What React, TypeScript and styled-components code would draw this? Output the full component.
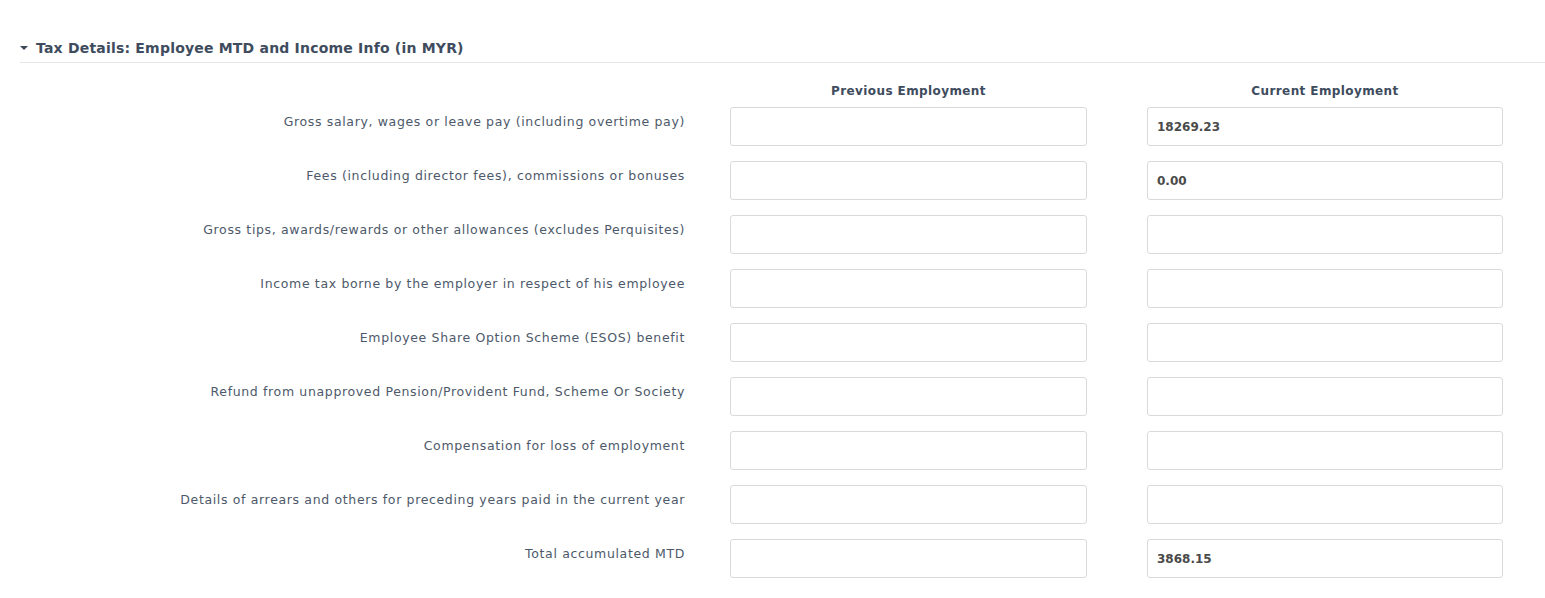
import React from "react";
import styled, { createGlobalStyle } from "styled-components";

const Global = createGlobalStyle`
  html, body { margin: 0; padding: 0; background: #ffffff; }
  body { font-family: "DejaVu Sans", "Liberation Sans", sans-serif; }
`;

const Section = styled.section`
  padding: 36px 0 0 20px;
`;

const Header = styled.div`
  display: flex;
  align-items: center;
  gap: 8px;
  height: 22px;
  padding-bottom: 4px;
  border-bottom: 1px solid #e4e6e9;
`;

const Caret = styled.span`
  width: 0;
  height: 0;
  border-left: 4px solid transparent;
  border-right: 4px solid transparent;
  border-top: 4px solid #3b4656;
  margin-top: 1px;
`;

const Title = styled.h2`
  margin: 0;
  font-size: 14px;
  font-weight: 700;
  color: #3e4c5e;
  letter-spacing: 0.2px;
  line-height: 22px;
  padding-top: 1px;
`;

const Grid = styled.div`
  display: flex;
  flex-direction: column;
  gap: 15px;
  margin-top: 20px;
`;

const Row = styled.div`
  display: flex;
  align-items: flex-start;
`;

const LabelCell = styled.div`
  width: 665px;
  flex: none;
  text-align: right;
  font-size: 12.5px;
  line-height: 18px;
  padding-top: 6px;
  color: #4d596a;
  letter-spacing: 0.65px;
`;

const Cell = styled.div<{ $gap: number; $w: number }>`
  margin-left: ${(p) => p.$gap}px;
  width: ${(p) => p.$w}px;
  flex: none;
`;

const ColHead = styled.div`
  text-align: center;
  font-size: 12px;
  font-weight: 700;
  color: #3e4c5e;
  line-height: 16px;
  letter-spacing: 0.4px;
  margin-bottom: -7px;
`;

const Input = styled.input`
  box-sizing: border-box;
  width: 100%;
  height: 39px;
  border: 1px solid #d8dadd;
  border-radius: 3px;
  background: #fff;
  padding: 0 9px;
  font-family: "DejaVu Sans", "Liberation Sans", sans-serif;
  font-size: 12px;
  font-weight: 600;
  color: #4a4a4a;
  outline: none;
`;

const rows: [string, string, string][] = [
  ["Gross salary, wages or leave pay (including overtime pay)", "", "18269.23"],
  ["Fees (including director fees), commissions or bonuses", "", "0.00"],
  ["Gross tips, awards/rewards or other allowances (excludes Perquisites)", "", ""],
  ["Income tax borne by the employer in respect of his employee", "", ""],
  ["Employee Share Option Scheme (ESOS) benefit", "", ""],
  ["Refund from unapproved Pension/Provident Fund, Scheme Or Society", "", ""],
  ["Compensation for loss of employment", "", ""],
  ["Details of arrears and others for preceding years paid in the current year", "", ""],
  ["Total accumulated MTD", "", "3868.15"],
];

export default function App() {
  return (
    <>
      <Global />
      <Section>
        <Header>
          <Caret />
          <Title>Tax Details: Employee MTD and Income Info (in MYR)</Title>
        </Header>
        <Grid>
          <Row>
            <LabelCell />
            <Cell $gap={45} $w={357}>
              <ColHead>Previous Employment</ColHead>
            </Cell>
            <Cell $gap={60} $w={356}>
              <ColHead>Current Employment</ColHead>
            </Cell>
          </Row>
          {rows.map(([label, prev, cur]) => (
            <Row key={label}>
              <LabelCell>{label}</LabelCell>
              <Cell $gap={45} $w={357}>
                <Input defaultValue={prev} />
              </Cell>
              <Cell $gap={60} $w={356}>
                <Input defaultValue={cur} />
              </Cell>
            </Row>
          ))}
        </Grid>
      </Section>
    </>
  );
}
